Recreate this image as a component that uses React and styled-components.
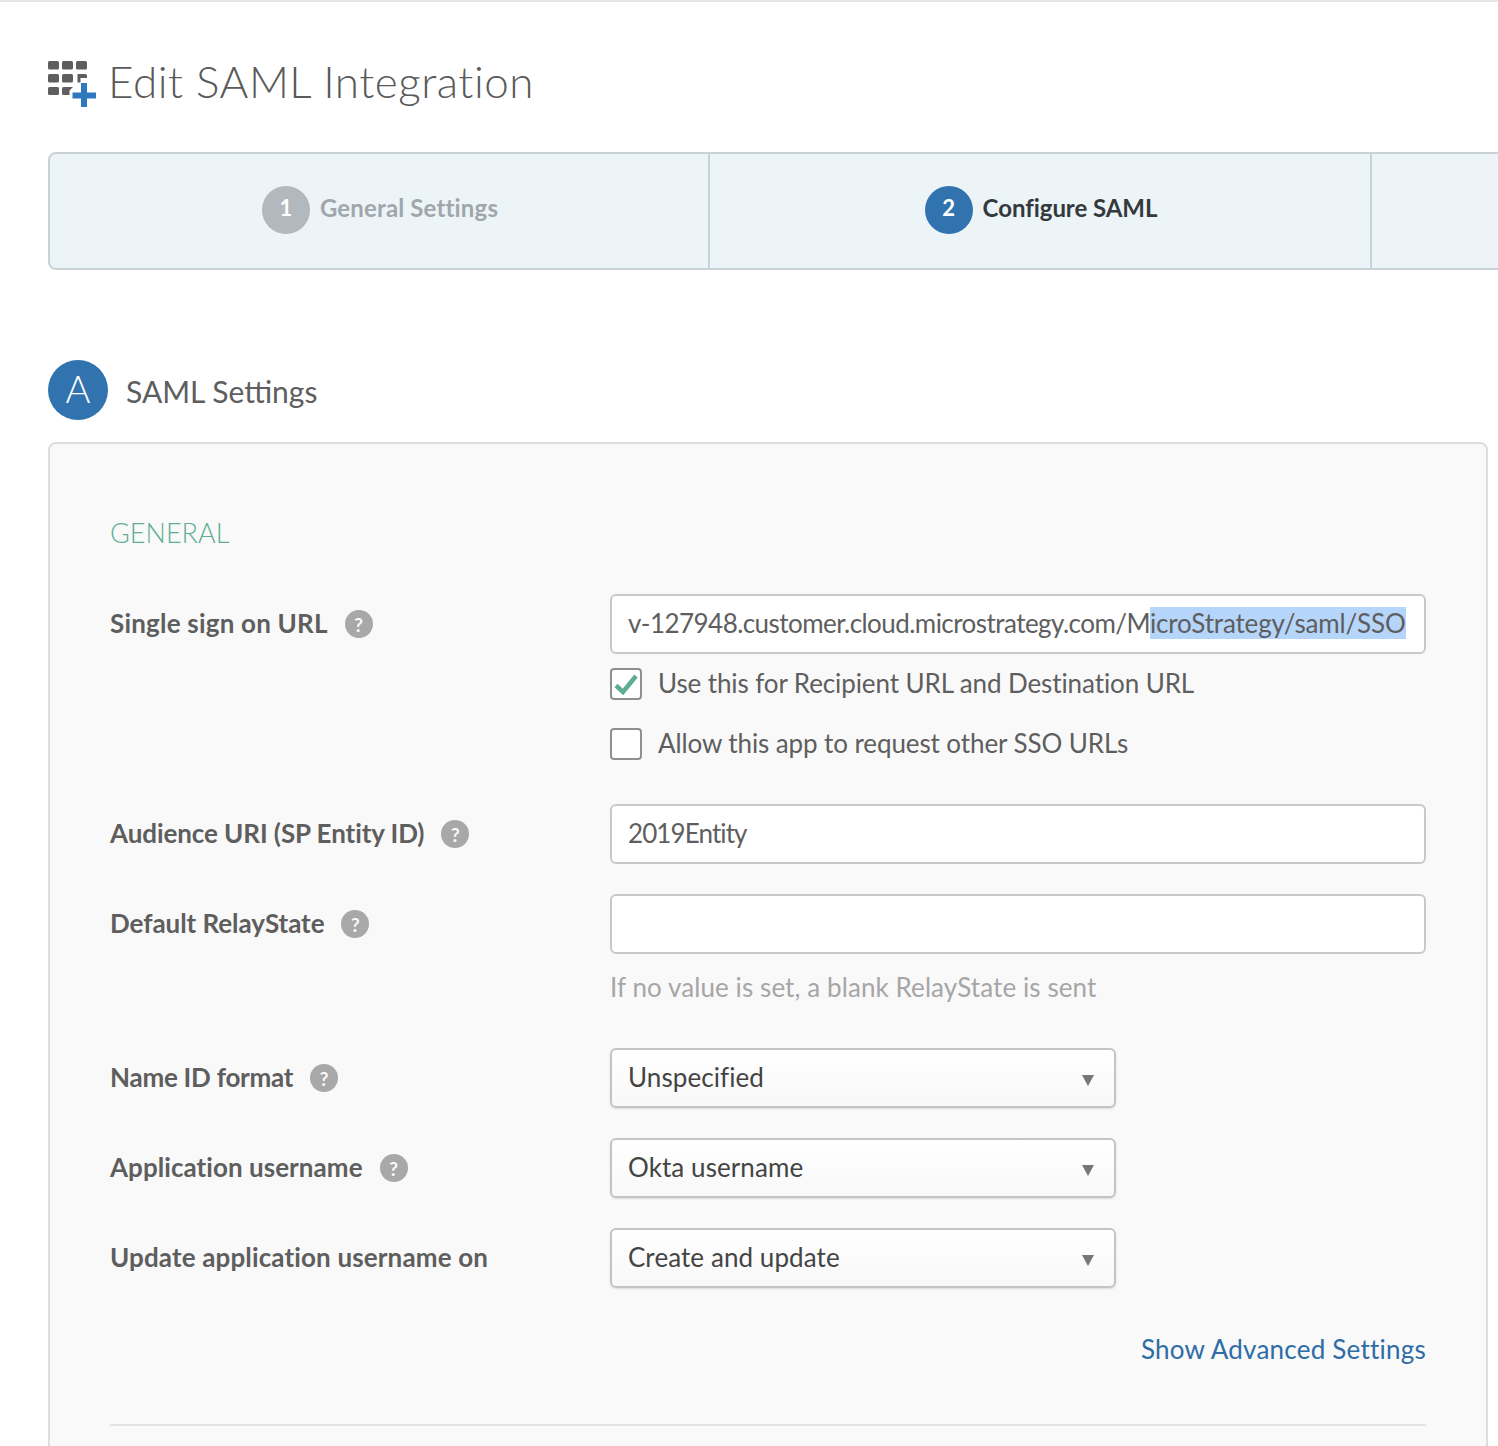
import React from 'react';
import styled, { createGlobalStyle } from 'styled-components';

const Global = createGlobalStyle`
  html, body { margin: 0; padding: 0; background: #fff; }
  body { font-family: "Lato", "Open Sans", Arial, sans-serif; color: #5e5e5e; }
`;

const Page = styled.div`
  width: 1498px;
  height: 1446px;
  overflow: hidden;
  box-sizing: border-box;
  border-top: 2px solid #e6e6e6;
  padding: 54px 0 0 48px;
`;

const TitleRow = styled.div`
  display: flex;
  align-items: center;
  gap: 12px;
  height: 56px;
`;

const Title = styled.h1`
  margin: -6px 0 0;
  font-size: 44px;
  font-weight: 300;
  line-height: 56px;
  letter-spacing: 0.5px;
  color: #5a5a5a;
`;

const Steps = styled.div`
  display: flex;
  margin-top: 40px;
  width: 1500px;
  height: 118px;
  box-sizing: border-box;
  background: #edf4f8;
  border: 2px solid #c9d3d7;
  border-radius: 8px 0 0 8px;
`;

const Step = styled.div`
  width: 662px;
  flex: none;
  box-sizing: border-box;
  display: flex;
  align-items: center;
  justify-content: center;
  gap: 10px;
  border-right: 2px solid #c9d3d7;
  padding: 0 0 2px 2px;

  &:first-child {
    width: 660px;
  }
`;

const StepNum = styled.span`
  width: 48px;
  height: 48px;
  border-radius: 50%;
  display: flex;
  align-items: center;
  justify-content: center;
  padding-bottom: 6px;
  box-sizing: border-box;
  font-size: 22px;
  font-weight: 700;
  color: #fff;
  background: ${p => (p.$active ? '#3173ae' : '#b1b9bf')};
`;

const StepLabel = styled.span`
  margin-top: -6px;
  font-size: 24px;
  font-weight: 700;
  letter-spacing: ${p => (p.$active ? -0.05 : 0.15)}px;
  color: ${p => (p.$active ? '#33393d' : '#a0a7ac')};
`;

const SectionHead = styled.div`
  display: flex;
  align-items: center;
  gap: 18px;
  margin-top: 90px;
`;

const SectionBadge = styled.span`
  width: 60px;
  height: 60px;
  border-radius: 50%;
  box-sizing: border-box;
  padding-bottom: 5px;
  background: #3173ae;
  color: #fff;
  font-size: 38px;
  font-weight: 300;
  display: flex;
  align-items: center;
  justify-content: center;
`;

const SectionTitle = styled.h2`
  margin: 2px 0 0;
  font-size: 30px;
  font-weight: 400;
  color: #5e5e5e;
`;

const Panel = styled.div`
  margin-top: 22px;
  width: 1440px;
  height: 1100px;
  box-sizing: border-box;
  background: #f9f9f9;
  border: 2px solid #dedede;
  border-radius: 8px 8px 0 0;
  padding: 69px 60px 0;
`;

const GroupTitle = styled.h3`
  margin: 0 0 41px;
  font-size: 27px;
  line-height: 40px;
  font-weight: 300;
  color: #5fae93;
`;

const Row = styled.div`
  display: grid;
  grid-template-columns: 500px 816px;
  margin-bottom: ${p => p.$gap ?? 30}px;
`;

const Label = styled.div`
  display: flex;
  align-items: center;
  gap: 17px;
  height: 60px;
  box-sizing: border-box;
  padding-bottom: 2px;
  font-size: 26px;
  font-weight: 700;
  letter-spacing: ${p => p.$spacing ?? 0}px;
  color: #5e5e5e;
`;

const Help = styled.span`
  width: 28px;
  height: 28px;
  margin-top: 2px;
  border-radius: 50%;
  background: #a8a8a8;
  color: #f9f9f9;
  font-size: 19px;
  font-weight: 700;
  letter-spacing: 0;
  display: flex;
  align-items: center;
  justify-content: center;
`;

const Input = styled.div`
  height: 60px;
  box-sizing: border-box;
  background: #fff;
  border: 2px solid #c8c8c8;
  border-radius: 6px;
  padding: 0 16px 2px;
  display: flex;
  align-items: center;
  font-size: 26px;
  letter-spacing: ${p => p.$spacing ?? 0}px;
  color: #5e5e5e;
  white-space: pre;
  overflow: hidden;
`;

const Selected = styled.span`
  background: #b5d5fb;
  line-height: 32px;
  letter-spacing: -0.16px;
`;

const CheckRow = styled.label`
  display: flex;
  align-items: center;
  gap: 16px;
  height: 32px;
  margin-top: ${p => p.$top}px;
  font-size: 26px;
  letter-spacing: -0.1px;
  line-height: 30px;
  color: #5e5e5e;
`;

const CheckBox = styled.span`
  width: 32px;
  height: 32px;
  box-sizing: border-box;
  background: #fff;
  border: 2px solid #8f8f8f;
  border-radius: 4px;
  display: flex;
  align-items: center;
  justify-content: center;
`;

const CheckText = styled.span`
  margin-top: -2px;
`;

const Hint = styled.div`
  margin-top: 17px;
  margin-bottom: 1px;
  font-size: 26px;
  line-height: 32px;
  letter-spacing: 0.09px;
  color: #a6a6a6;
`;

const Select = styled.div`
  width: 506px;
  height: 60px;
  box-sizing: border-box;
  background: linear-gradient(#ffffff, #f8f8f8);
  border: 2px solid #c4c4c4;
  border-radius: 6px;
  box-shadow: 0 1px 2px rgba(0, 0, 0, 0.12);
  padding: 0 20px 2px 16px;
  display: flex;
  align-items: center;
  justify-content: space-between;
  font-size: 26px;
  letter-spacing: 0.08px;
  color: #444;
`;

const Caret = styled.span`
  width: 0;
  height: 0;
  margin-top: 6px;
  border-left: 6px solid transparent;
  border-right: 6px solid transparent;
  border-top: 11px solid #777;
`;

const LinkRow = styled.div`
  display: flex;
  justify-content: flex-end;
  width: 1316px;
  margin-top: 45px;
`;

const AdvancedLink = styled.a`
  font-size: 26px;
  line-height: 32px;
  letter-spacing: 0.23px;
  color: #2e6ca6;
  text-decoration: none;
`;

const Divider = styled.hr`
  width: 1316px;
  margin: 59px 0 0;
  border: 0;
  border-top: 2px solid #e4e4e4;
`;

const AddAppIcon = () => (
  <svg width="48" height="48" viewBox="0 0 48 48" style={{ flex: 'none', marginTop: 2 }}>
    <g fill="#5e5e5e">
      <rect x="0" y="0" width="11" height="8.5" rx="1.5" />
      <rect x="14" y="0" width="11" height="8.5" rx="1.5" />
      <rect x="28" y="0" width="11" height="8.5" rx="1.5" />
      <rect x="0" y="13" width="11" height="8.5" rx="1.5" />
      <rect x="14" y="13" width="11" height="8.5" rx="1.5" />
      <path d="M29.500 13H37.500Q39 13 39 14.500V17H32.500V21.500H29.500Z" />
      <rect x="0" y="26" width="11" height="8" rx="1.5" />
      <path d="M15.500 26H25L21.500 29.500V34H15.500Q14 34 14 32.500V27.500Q14 26 15.500 26Z" />
    </g>
    <path d="M33 22h6v9.500h9v6h-9V46h-6v-8.500h-8.500v-6H33z" fill="#2f78bd" />
  </svg>
);

const CheckMark = () => (
  <svg width="26" height="22" viewBox="0 0 26 22">
    <path d="M3 12.500 L10 19 L23 3" fill="none" stroke="#5cae8f" strokeWidth="4.500" />
  </svg>
);

const HelpIcon = () => <Help>?</Help>;

export default function App() {
  return (
    <Page>
      <Global />
      <TitleRow>
        <AddAppIcon />
        <Title>Edit SAML Integration</Title>
      </TitleRow>

      <Steps>
        <Step>
          <StepNum>1</StepNum>
          <StepLabel>General Settings</StepLabel>
        </Step>
        <Step>
          <StepNum $active>2</StepNum>
          <StepLabel $active>Configure SAML</StepLabel>
        </Step>
      </Steps>

      <SectionHead>
        <SectionBadge>A</SectionBadge>
        <SectionTitle>SAML Settings</SectionTitle>
      </SectionHead>

      <Panel>
        <GroupTitle>GENERAL</GroupTitle>

        <Row $gap={44}>
          <Label $spacing={0.2}>Single sign on URL <HelpIcon /></Label>
          <div>
            <Input $spacing={-0.55}>v-127948.customer.cloud.microstrategy.com/M<Selected>icroStrategy/saml/SSO</Selected></Input>
            <CheckRow $top={14}>
              <CheckBox><CheckMark /></CheckBox>
              <CheckText>Use this for Recipient URL and Destination URL</CheckText>
            </CheckRow>
            <CheckRow $top={28}>
              <CheckBox />
              <CheckText>Allow this app to request other SSO URLs</CheckText>
            </CheckRow>
          </div>
        </Row>

        <Row>
          <Label $spacing={-0.08}>Audience URI (SP Entity ID) <HelpIcon /></Label>
          <Input $spacing={-0.9}>2019Entity</Input>
        </Row>

        <Row $gap={44}>
          <Label $spacing={-0.05}>Default RelayState <HelpIcon /></Label>
          <div>
            <Input />
            <Hint>If no value is set, a blank RelayState is sent</Hint>
          </div>
        </Row>

        <Row>
          <Label $spacing={-0.25}>Name ID format <HelpIcon /></Label>
          <Select>Unspecified<Caret /></Select>
        </Row>
        <Row>
          <Label $spacing={0.05}>Application username <HelpIcon /></Label>
          <Select>Okta username<Caret /></Select>
        </Row>
        <Row>
          <Label $spacing={0.14}>Update application username on</Label>
          <Select>Create and update<Caret /></Select>
        </Row>

        <LinkRow>
          <AdvancedLink href="#">Show Advanced Settings</AdvancedLink>
        </LinkRow>
        <Divider />
      </Panel>
    </Page>
  );
}
